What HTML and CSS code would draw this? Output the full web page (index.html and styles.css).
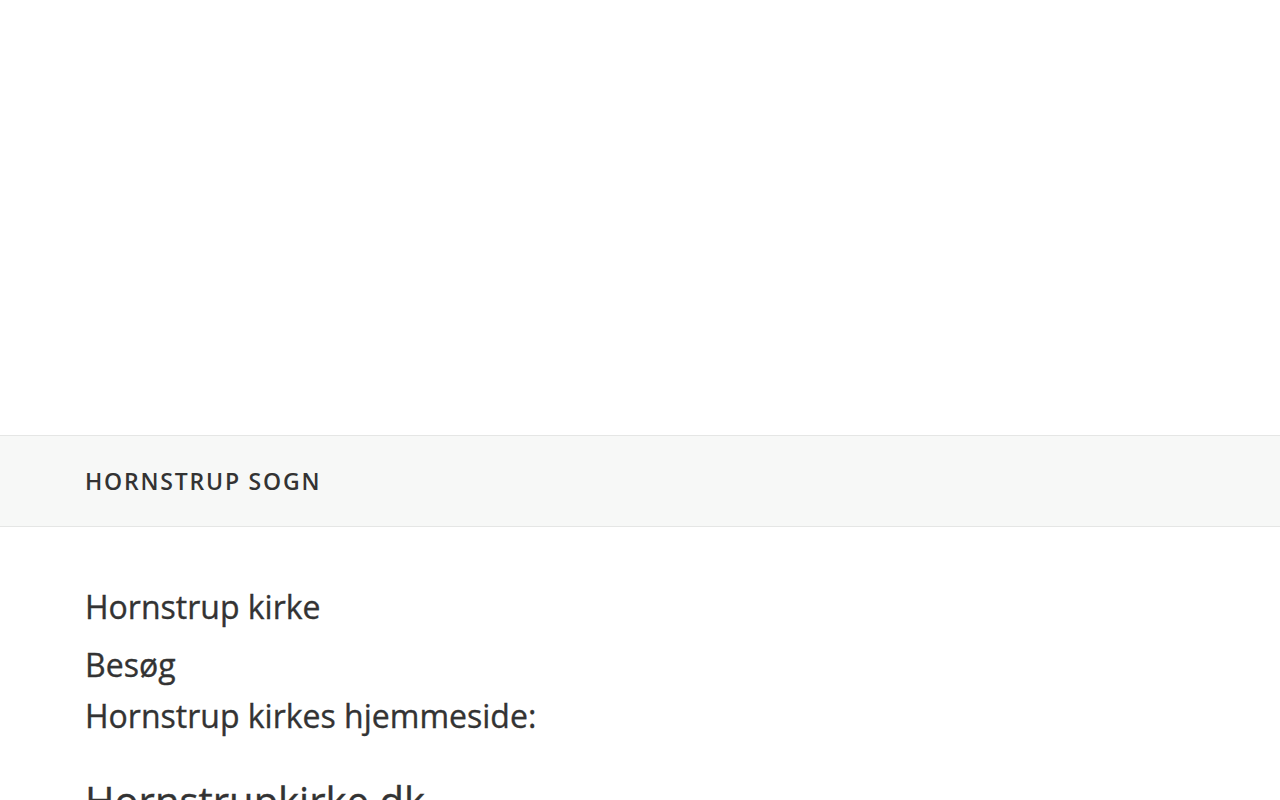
FILE: index.html
```html
<!DOCTYPE html>
<html lang="da">
<head>
<meta charset="utf-8">
<title>Hornstrup Sogn</title>
<link rel="stylesheet" href="styles.css">
</head>
<body>
<header class="hero"></header>
<nav class="site-bar">
  <div class="site-title">HORNSTRUP SOGN</div>
</nav>
<main class="content">
  <h1 class="page-title">Hornstrup kirke</h1>
  <h2 class="sub sub-first">Besøg</h2>
  <h2 class="sub sub-second">Hornstrup kirkes hjemmeside:</h2>
  <p class="link">Hornstrupkirke.dk</p>
</main>
</body>
</html>
```
FILE: styles.css
```css
html, body {
  margin: 0;
  padding: 0;
  background: #fff;
  color: #333;
  font-family: "Open Sans", "Lato", sans-serif;
}
.hero {
  height: 435px;
}
.site-bar {
  height: 90px;
  border-top: 1px solid #e5e6e5;
  border-bottom: 1px solid #e5e6e5;
  background: #f7f8f7;
  display: flex;
  align-items: center;
  padding: 0 85px;
}
.site-title {
  font-size: 23px;
  font-weight: 600;
  letter-spacing: 1.8px;
  color: #333;
}
.content {
  padding: 0 85px;
  overflow: hidden;
  height: 273px;
}
.page-title,
.sub,
.link {
  -webkit-text-stroke: 0.35px currentColor;
}
.page-title {
  margin: 60px 0 0;
  font-size: 32px;
  font-weight: 500;
  line-height: 40px;
}
.sub {
  margin: 0;
  font-size: 32px;
  font-weight: 500;
  line-height: 40px;
}
.sub-first {
  margin-top: 18px;
}
.sub-second {
  margin-top: 11px;
}
.link {
  margin: 40px 0 0;
  font-size: 40px;
  font-weight: 500;
  line-height: 50px;
}
```
